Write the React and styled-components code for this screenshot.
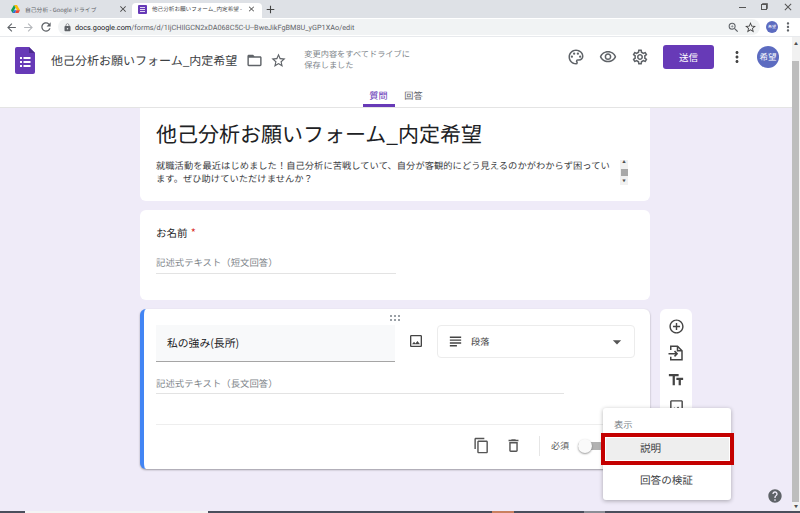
import React from 'react'
import styled, { createGlobalStyle } from 'styled-components'
import {
  MdArrowBack, MdArrowForward, MdRefresh, MdClose, MdAdd, MdLock, MdZoomIn, MdStarBorder,
  MdMoreVert, MdFolderOpen, MdOutlinePalette, MdOutlineVisibility, MdOutlineSettings,
  MdAddCircleOutline, MdOutlineImage, MdContentCopy, MdOutlineDelete, MdSubject,
  MdArrowDropDown, MdHelp, MdTextFields,
} from 'react-icons/md'

const GlobalStyle = createGlobalStyle`
  html, body { margin: 0; padding: 0; }
  body {
    width: 800px;
    height: 513px;
    overflow: hidden;
    font-family: "Noto Sans CJK JP", "Noto Sans", sans-serif;
    color: #202124;
    text-rendering: geometricPrecision;
  }
  * { box-sizing: border-box; }
`

const DriveLogo = () => (
  <svg width="9" height="8" viewBox="0 0 24 21" style={{ flex: 'none' }}>
    <path d="M8 0h8l8 14h-8z" fill="#fbbc04" />
    <path d="M8 0l4 7-8 14-4-7z" fill="#0f9d58" />
    <path d="M4 21l4-7h6l-3 7z" fill="#2b6fd6" />
    <path d="M11 21l3-7h10l-4 7z" fill="#ea4335" />
  </svg>
)

const FormsLogo = () => (
  <svg width="20" height="27" viewBox="0 0 20 27" style={{ flex: 'none' }}>
    <path d="M2 0h12l6 6v19a2 2 0 0 1-2 2H2a2 2 0 0 1-2-2V2a2 2 0 0 1 2-2z" fill="#673ab7" />
    <path d="M14 0l6 6h-6z" fill="#4a2a8c" />
    <g fill="#fff">
      <rect x="5" y="10" width="2" height="2" />
      <rect x="8.5" y="10" width="7" height="2" />
      <rect x="5" y="14" width="2" height="2" />
      <rect x="8.5" y="14" width="7" height="2" />
      <rect x="5" y="18" width="2" height="2" />
      <rect x="8.5" y="18" width="7" height="2" />
    </g>
  </svg>
)

const FormsTabIcon = () => (
  <svg width="9" height="9" viewBox="0 0 9 9" style={{ flex: 'none' }}>
    <rect width="9" height="9" rx="1" fill="#673ab7" />
    <path d="M2 2.5h5M2 4.5h5M2 6.5h5" stroke="#fff" strokeWidth="0.8" />
  </svg>
)

const ImportIcon = () => (
  <svg width="18" height="18" viewBox="0 0 24 24" fill="none" stroke="#444" strokeWidth="2">
    <path d="M5 8V3h9l6 6v12H5v-4" />
    <path d="M14 3v6h6" />
    <path d="M2 13h11M10 9.5l3.5 3.5-3.5 3.5" />
  </svg>
)

const DragDots = () => (
  <svg width="11" height="6" viewBox="0 0 11 6" fill="#9aa0a6">
    {[0, 4, 8].map((x) => [0, 4].map((y) => <rect key={`${x}-${y}`} x={x} y={y} width="2" height="2" />))}
  </svg>
)

export default function App() {
  return (
    <>
      <GlobalStyle />
      <Page>
        <TabStrip>
          <Tab>
            <DriveLogo />
            <TabTitle>自己分析 - Google ドライブ</TabTitle>
            <MdClose size={10} color="#444" />
          </Tab>
          <Tab $active>
            <FormsTabIcon />
            <TabTitle>他己分析お願いフォーム_内定希望 -</TabTitle>
            <MdClose size={10} color="#444" />
          </Tab>
          <NewTab><MdAdd size={13} /></NewTab>
          <WindowButtons>
            <MinLine />
            <RestoreBox />
            <MdClose size={12} color="#555" />
          </WindowButtons>
        </TabStrip>

        <Toolbar>
          <MdArrowBack size={13} color="#5f6368" />
          <MdArrowForward size={13} color="#b4b7bb" />
          <MdRefresh size={14} color="#5f6368" />
          <Omnibox>
            <MdLock size={9} color="#5f6368" />
            <Url>docs.google.com<UrlRest>/forms/d/1IjCHIlGCN2xDA068C5C-U--BweJikFgBM8U_yGP1XAo/edit</UrlRest></Url>
            <OmniIcons>
              <MdZoomIn size={13} color="#5f6368" />
              <MdStarBorder size={13} color="#444" />
            </OmniIcons>
          </Omnibox>
          <MiniAvatar>希望</MiniAvatar>
          <MdMoreVert size={14} color="#5f6368" />
        </Toolbar>

        <Viewport>
          <Content>
            <FormHeader>
              <HeaderTop>
                <FormsLogo />
                <DocTitle>他己分析お願いフォーム_内定希望</DocTitle>
                <DocIcons>
                  <MdFolderOpen size={17} color="#5f6368" />
                  <MdStarBorder size={17} color="#5f6368" />
                </DocIcons>
                <SaveNote>変更内容をすべてドライブに<br />保存しました</SaveNote>
                <HeaderActions>
                  <MdOutlinePalette size={18} color="#5f6368" />
                  <MdOutlineVisibility size={18} color="#5f6368" />
                  <MdOutlineSettings size={18} color="#5f6368" />
                  <SendButton>送信</SendButton>
                  <MdMoreVert size={18} color="#444" />
                  <Avatar>希望</Avatar>
                </HeaderActions>
              </HeaderTop>
              <Tabs>
                <FormTab $active>質問</FormTab>
                <FormTab>回答</FormTab>
              </Tabs>
            </FormHeader>

            <Main>
              <Column>
                <TitleCard>
                  <FormTitle>他己分析お願いフォーム_内定希望</FormTitle>
                  <DescRow>
                    <Desc>就職活動を最近はじめました！自己分析に苦戦していて、自分が客観的にどう見えるのかがわからず困っています。ぜひ助けていただけませんか？</Desc>
                    <MiniScroll>
                      <span>▲</span>
                      <MiniThumb />
                      <span>▼</span>
                    </MiniScroll>
                  </DescRow>
                </TitleCard>

                <Card>
                  <Question>お名前 <Required>*</Required></Question>
                  <ShortAnswer>記述式テキスト（短文回答）</ShortAnswer>
                </Card>

                <ActiveRow>
                  <ActiveCard>
                    <DragHandle><DragDots /></DragHandle>
                    <EditRow>
                      <QuestionInput>私の強み(長所)</QuestionInput>
                      <ImageIcon size={16} color="#444" />
                      <TypeSelect>
                        <MdSubject size={17} color="#444" />
                        <TypeLabel>段落</TypeLabel>
                        <MdArrowDropDown size={20} color="#555" />
                      </TypeSelect>
                    </EditRow>
                    <LongAnswer>記述式テキスト（長文回答）</LongAnswer>
                    <CardFooter>
                      <MdContentCopy size={17} color="#555" />
                      <MdOutlineDelete size={17} color="#555" />
                      <FooterDivider />
                      <RequiredLabel>必須</RequiredLabel>
                      <Toggle><ToggleKnob /></Toggle>
                    </CardFooter>
                  </ActiveCard>
                  <SideTools>
                    <MdAddCircleOutline size={17} color="#444" />
                    <ImportIcon />
                    <MdTextFields size={18} color="#444" />
                    <MdOutlineImage size={17} color="#444" />
                  </SideTools>
                </ActiveRow>
              </Column>
              <Menu>
                <MenuHeading>表示</MenuHeading>
                <MenuItem $marked>説明</MenuItem>
                <MenuItem>回答の検証</MenuItem>
              </Menu>
              <HelpButton><MdHelp size={16} color="#5f6368" /></HelpButton>
            </Main>
          </Content>

          <Scrollbar>
            <ScrollArrow>▲</ScrollArrow>
            <ScrollTrack><ScrollThumb /></ScrollTrack>
            <ScrollArrow $low>▼</ScrollArrow>
          </Scrollbar>
        </Viewport>
        <Taskbar>
          <TaskSegment $w={25} />
          <TaskSegment $w={183} $color="#f4f4f4" />
          <TaskSegment $w={284} />
          <TaskSegment $w={22} $color="#c9805f" />
          <TaskSegment $w={70} />
          <TaskSegment $w={21} $color="#8b8e96" />
          <TaskSegment $w={195} />
        </Taskbar>
      </Page>
    </>
  )
}

const Page = styled.div`
  width: 800px;
  height: 513px;
  display: flex;
  flex-direction: column;
  overflow: hidden;
  background: #fff;
`

const TabStrip = styled.div`
  height: 18px;
  flex: none;
  display: flex;
  align-items: flex-end;
  padding-left: 4px;
  background: #dee1e6;
`

const Tab = styled.div`
  width: ${(p) => (p.$active ? '130px' : '128px')};
  height: 15px;
  flex: none;
  display: flex;
  align-items: center;
  gap: 5px;
  padding: 0 ${(p) => (p.$active ? '6px' : '4px')} 3px ${(p) => (p.$active ? '6px' : '7px')};
  border-radius: 4px 4px 0 0;
  background: ${(p) => (p.$active ? '#fff' : 'transparent')};
  font-size: ${(p) => (p.$active ? '5.6px' : '5.8px')};
  color: ${(p) => (p.$active ? '#3c4043' : '#5f6368')};
`

const TabTitle = styled.span`
  flex: 1;
  white-space: nowrap;
`

const NewTab = styled.div`
  display: flex;
  align-items: center;
  height: 14px;
  margin: 0 0 2px 2px;
  color: #444;
`

const WindowButtons = styled.div`
  width: 55px;
  height: 12px;
  align-self: flex-start;
  margin: 1px 6px 0 auto;
  display: flex;
  align-items: center;
  justify-content: space-between;
`

const MinLine = styled.div`
  width: 7px;
  height: 1px;
  background: #555;
`

const RestoreBox = styled.div`
  width: 6px;
  height: 6px;
  border: 1px solid #555;
  box-shadow: 1px -1px 0 -0.2px #555;
`

const Toolbar = styled.div`
  height: 19px;
  flex: none;
  display: flex;
  align-items: center;
  gap: 4px;
  padding: 0 5px;
  border-bottom: 1px solid #e8eaed;
  background: #fff;
`

const Omnibox = styled.div`
  flex: 1;
  height: 16px;
  margin: 0 2px 0 1px;
  display: flex;
  align-items: center;
  gap: 3px;
  padding: 0 3px 0 5px;
  border-radius: 8px;
  background: #f1f3f4;
`

const Url = styled.span`
  font-family: Roboto, sans-serif;
  font-size: 7.3px;
  color: #202124;
`

const UrlRest = styled.span`
  color: #5f6368;
`

const OmniIcons = styled.div`
  margin-left: auto;
  display: flex;
  align-items: center;
  gap: 4px;
`

const MiniAvatar = styled.div`
  width: 12px;
  height: 12px;
  flex: none;
  margin-right: -1px;
  display: flex;
  align-items: center;
  justify-content: center;
  border-radius: 50%;
  background: #5c6bc0;
  color: #fff;
  font-size: 4px;
`

const Viewport = styled.div`
  flex: 1;
  min-height: 0;
  display: flex;
`

const Content = styled.div`
  flex: 1;
  min-width: 0;
  display: flex;
  flex-direction: column;
`

const FormHeader = styled.header`
  height: 71px;
  flex: none;
  display: flex;
  flex-direction: column;
  border-bottom: 1px solid #e4e4e4;
  background: #fff;
`

const HeaderTop = styled.div`
  height: 46px;
  flex: none;
  display: flex;
  align-items: center;
  padding: 0 13px 0 15px;
`

const DocTitle = styled.div`
  margin-left: 16px;
  font-size: 12px;
  color: #3c4043;
  white-space: nowrap;
`

const DocIcons = styled.div`
  display: flex;
  align-items: center;
  gap: 7px;
  margin-left: 9px;
`

const SaveNote = styled.div`
  margin-left: 17px;
  font-size: 8.2px;
  line-height: 11px;
  color: #80868b;
  white-space: nowrap;
`

const HeaderActions = styled.div`
  margin: 0 0 6px auto;
  display: flex;
  align-items: center;
  gap: 14px;
`

const SendButton = styled.button`
  width: 51px;
  height: 24px;
  border: 0;
  border-radius: 3px;
  background: #673ab7;
  color: #fff;
  font: inherit;
  font-size: 9.5px;
`

const Avatar = styled.div`
  width: 22px;
  height: 22px;
  margin-left: -3px;
  display: flex;
  align-items: center;
  justify-content: center;
  border-radius: 50%;
  background: #5c6bc0;
  color: #fff;
  font-size: 8.5px;
`

const Tabs = styled.nav`
  flex: 1;
  display: flex;
  justify-content: center;
  gap: 3px;
`

const FormTab = styled.div`
  width: 32px;
  height: 100%;
  display: flex;
  justify-content: center;
  padding-top: 5px;
  font-size: 9.2px;
  line-height: 14px;
  color: ${(p) => (p.$active ? '#673ab7' : '#5f6368')};
  border-bottom: 3px solid ${(p) => (p.$active ? '#673ab7' : 'transparent')};
`

const Main = styled.main`
  flex: 1;
  min-height: 0;
  position: relative;
  overflow: hidden;
  background: #efebf8;
  padding-left: 140px;
`

const Column = styled.div`
  width: 552px;
  display: flex;
  flex-direction: column;
  gap: 9px;
`

const Card = styled.section`
  width: 510px;
  height: 90px;
  padding: 16px 16px 0;
  border-radius: 6px;
  background: #fff;
`

const TitleCard = styled.section`
  width: 510px;
  height: 93px;
  padding: 11px 16px 0;
  border-radius: 0 0 6px 6px;
  background: #fff;
`

const FormTitle = styled.h1`
  margin: 0;
  font-size: 21px;
  font-weight: 400;
  line-height: 30px;
  white-space: nowrap;
  color: #202124;
`

const DescRow = styled.div`
  display: flex;
  align-items: flex-start;
  gap: 4px;
  margin-top: 10px;
`

const Desc = styled.p`
  width: 460px;
  margin: 0;
  font-size: 9.25px;
  letter-spacing: 0.05px;
  line-height: 13px;
  color: #3c4043;
`

const MiniScroll = styled.div`
  width: 8px;
  height: 25px;
  margin-top: 1px;
  display: flex;
  flex-direction: column;
  align-items: center;
  justify-content: space-between;
  background: #f1f1f1;
  color: #505050;
  font-size: 3.5px;
  line-height: 6px;
`

const MiniThumb = styled.div`
  width: 7px;
  height: 7px;
  background: #a8a8a8;
`

const Question = styled.div`
  font-size: 10.5px;
  line-height: 15px;
  color: #202124;
`

const Required = styled.span`
  margin-left: 1px;
  font-size: 11px;
  color: #d93025;
`

const ShortAnswer = styled.div`
  width: 240px;
  margin-top: 13px;
  padding-bottom: 3px;
  border-bottom: 1px solid #e3e3e3;
  font-size: 9.4px;
  line-height: 16px;
  color: #80868b;
`

const ActiveRow = styled.div`
  display: flex;
  align-items: flex-start;
  gap: 10px;
`

const ActiveCard = styled.section`
  width: 510px;
  height: 160px;
  flex: none;
  position: relative;
  display: flex;
  flex-direction: column;
  padding: 16px 16px 0 12px;
  border-left: 4px solid #4285f4;
  border-radius: 6px;
  background: #fff;
  box-shadow: 0 1px 2px rgba(0, 0, 0, 0.35);
`

const DragHandle = styled.div`
  position: absolute;
  top: 5px;
  left: 246px;
  line-height: 0;
`

const EditRow = styled.div`
  display: flex;
  align-items: flex-start;
  gap: 13px;
`

const QuestionInput = styled.div`
  width: 239px;
  height: 37px;
  flex: none;
  display: flex;
  align-items: center;
  padding-left: 11px;
  border-bottom: 1px solid #a5a5a5;
  background: #f8f9fa;
  font-size: 10.8px;
  color: #202124;
`

const ImageIcon = styled(MdOutlineImage)`
  flex: none;
  margin-top: 8px;
`

const TypeSelect = styled.div`
  width: 198px;
  height: 33px;
  flex: none;
  display: flex;
  align-items: center;
  padding: 0 7px 0 9px;
  border: 1px solid #ececec;
  border-radius: 4px;
`

const TypeLabel = styled.span`
  flex: 1;
  margin-left: 7px;
  padding-bottom: 1px;
  font-size: 9.2px;
  color: #444;
`

const LongAnswer = styled.div`
  width: 408px;
  margin-top: 13px;
  padding-bottom: 2px;
  border-bottom: 1px solid #e3e3e3;
  font-size: 9.4px;
  line-height: 16px;
  color: #80868b;
`

const CardFooter = styled.div`
  height: 42px;
  margin-top: 30px;
  display: flex;
  align-items: center;
  gap: 15px;
  padding-left: 317px;
  border-top: 1px solid #eeeeee;
`

const FooterDivider = styled.div`
  width: 1px;
  height: 20px;
  margin-left: 2px;
  background: #e6e6e6;
`

const RequiredLabel = styled.span`
  margin-left: -4px;
  font-size: 9px;
  color: #555;
  white-space: nowrap;
`

const Toggle = styled.div`
  width: 26px;
  height: 8px;
  flex: none;
  margin-left: -6px;
  position: relative;
  border-radius: 4px;
  background: #b2b2b2;
`

const ToggleKnob = styled.div`
  position: absolute;
  top: -3px;
  left: 0;
  width: 14px;
  height: 14px;
  border-radius: 50%;
  background: #fafafa;
  box-shadow: 0 1px 2px rgba(0, 0, 0, 0.4);
`

const SideTools = styled.aside`
  width: 32px;
  height: 120px;
  flex: none;
  display: flex;
  flex-direction: column;
  align-items: center;
  gap: 9px;
  padding-top: 9px;
  border-radius: 6px;
  background: #fff;
`

const Menu = styled.div`
  position: absolute;
  left: 603px;
  top: 300px;
  width: 128px;
  height: 92px;
  padding-top: 8px;
  border-radius: 3px;
  background: #fff;
  box-shadow: 0 1px 4px rgba(0, 0, 0, 0.3);
`

const MenuHeading = styled.div`
  height: 16px;
  padding-left: 11px;
  font-size: 9.3px;
  line-height: 16px;
  color: #80868b;
`

const MenuItem = styled.div`
  height: 32px;
  display: flex;
  align-items: center;
  padding: 0 0 2px 37px;
  font-size: 10.6px;
  color: #3c4043;
  ${(p) => p.$marked && `
    width: 133px;
    height: 32px;
    margin: 1px 0 0 -2px;
    padding: 0 0 2px 35px;
    border: 4px solid #c40000;
    background: #eeeeee;
    box-shadow: inset 0 0 0 1px #fff;
  `}
`

const HelpButton = styled.div`
  position: absolute;
  right: 9px;
  bottom: 7px;
  line-height: 0;
`

const Scrollbar = styled.div`
  width: 8px;
  flex: none;
  display: flex;
  flex-direction: column;
  background: #f1f1f1;
`

const ScrollArrow = styled.div`
  height: ${(p) => (p.$low ? '9px' : '13px')};
  flex: none;
  display: flex;
  align-items: center;
  justify-content: center;
  font-size: 4px;
  color: #505050;
`

const ScrollTrack = styled.div`
  flex: 1;
  padding-top: 11px;
`

const ScrollThumb = styled.div`
  width: 7px;
  height: 100%;
  background: #bdbdbd;
`

const Taskbar = styled.div`
  height: 2px;
  flex: none;
  display: flex;
`

const TaskSegment = styled.div`
  width: ${(p) => p.$w}px;
  background: ${(p) => p.$color || '#4a4f5c'};
`
